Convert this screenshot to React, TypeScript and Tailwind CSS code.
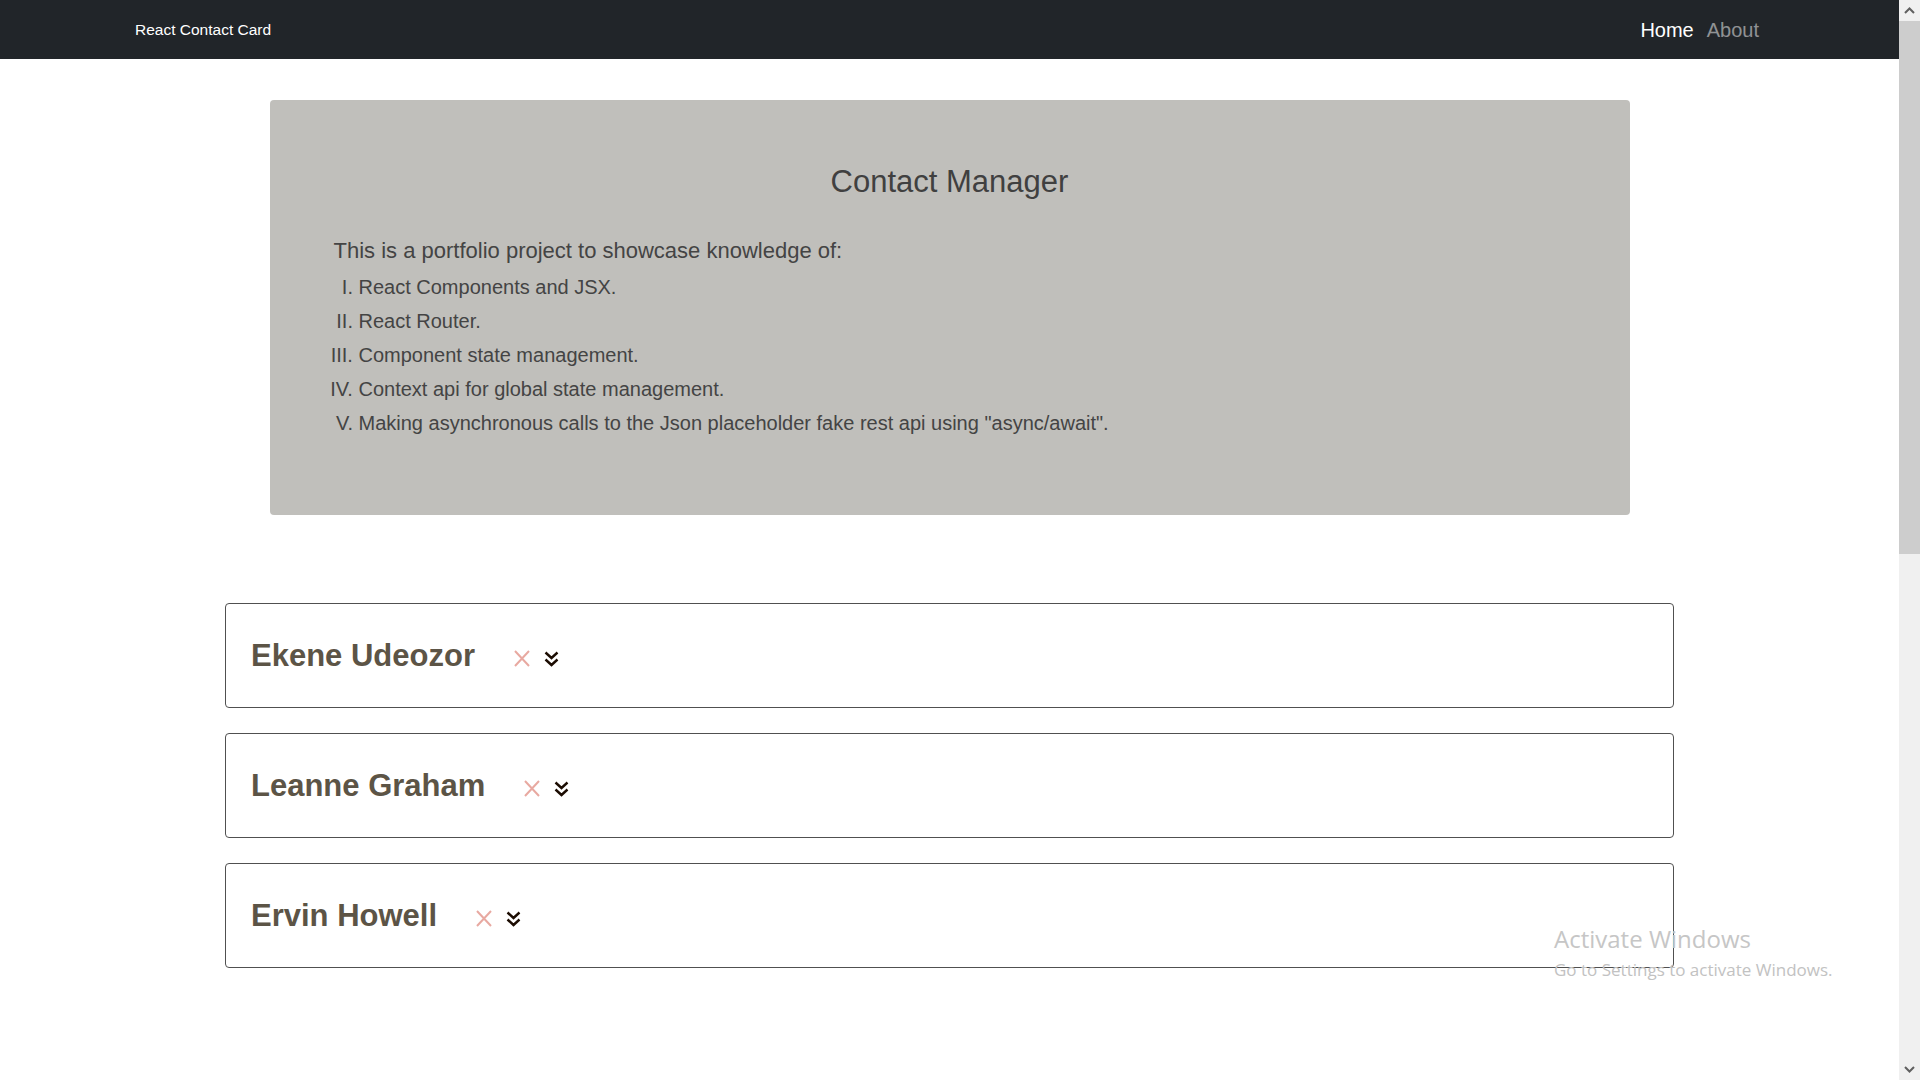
const contacts = ["Ekene Udeozor", "Leanne Graham", "Ervin Howell"];

const features = [
  "React Components and JSX.",
  "React Router.",
  "Component state management.",
  "Context api for global state management.",
  'Making asynchronous calls to the Json placeholder fake rest api using "async/await".',
];

function Navbar() {
  return (
    <nav className="h-[59px] shrink-0 bg-[#212529] flex items-center pl-[135px] pr-[140px]">
      <a className="text-white text-[15.5px] leading-[24px]">React Contact Card</a>
      <div className="ml-auto flex items-center gap-[13px] text-[20px] leading-[30px]">
        <a className="text-white">Home</a>
        <a className="text-white/50">About</a>
      </div>
    </nav>
  );
}

function Contact({ name }: { name: string }) {
  return (
    <div className="h-[105px] shrink-0 border border-[#505050] rounded-[4px] pl-[25px] pr-[24px] flex items-center">
      <h3 className="text-[31px] leading-[37px] font-bold text-[#5c5446]">{name}</h3>
      <div className="ml-[39px] mt-[6px] flex items-center">
        <svg width="16" height="17" viewBox="0 0 16 17" className="cursor-pointer">
          <path d="M1 1 L15 16 M15 1 L1 16" stroke="#e8a9a1" strokeWidth="2" fill="none" />
        </svg>
        <svg width="15" height="16" viewBox="0 0 15 16" className="ml-[14px] cursor-pointer">
          <path
            d="M1.5 1.5 L7.5 7 L13.5 1.5 M1.5 8.5 L7.5 14 L13.5 8.5"
            stroke="#1c0c02"
            strokeWidth="2.4"
            fill="none"
          />
        </svg>
      </div>
    </div>
  );
}

function Scrollbar() {
  return (
    <div className="w-[21px] h-screen shrink-0 bg-[#f0f0f0] flex flex-col">
      <div className="h-[21px] shrink-0 flex items-center justify-center">
        <svg width="11" height="7" viewBox="0 0 11 7">
          <path d="M1 6 L5.5 1.5 L10 6" stroke="#606060" strokeWidth="2" fill="none" />
        </svg>
      </div>
      <div className="h-[533px] shrink-0 bg-[#cdcdcd]" />
      <div className="flex-1" />
      <div className="h-[21px] shrink-0 flex items-center justify-center">
        <svg width="11" height="7" viewBox="0 0 11 7">
          <path d="M1 1 L5.5 5.5 L10 1" stroke="#606060" strokeWidth="2" fill="none" />
        </svg>
      </div>
    </div>
  );
}

export default function App() {
  return (
    <div className="relative flex h-screen overflow-hidden bg-white font-['Liberation_Sans',Arial,sans-serif]">
      <div className="flex-1 flex flex-col overflow-hidden">
        <Navbar />

        <div className="mt-[41px] w-[1360px] mx-auto shrink-0 rounded-[4px] bg-[#c0bfbb] pt-[63px] pb-[75px] px-[64px] text-[#444444]">
          <h1 className="text-center text-[31px] leading-[37px] text-[#404040]">Contact Manager</h1>
          <p className="mt-[36px] text-[22px] leading-[30px]">
            This is a portfolio project to showcase knowledge of:
          </p>
          <ol className="mt-[4px] list-[upper-roman] pl-[25px] text-[20px] leading-[34px]">
            {features.map((f) => (
              <li key={f}>{f}</li>
            ))}
          </ol>
        </div>

        <div className="mt-[88px] w-[1449px] mx-auto flex flex-col gap-[25px] pb-[120px]">
          {contacts.map((c) => (
            <Contact key={c} name={c} />
          ))}
        </div>
      </div>

      <Scrollbar />

      <div className="absolute left-[1554px] top-[924px] pointer-events-none font-['Open_Sans',sans-serif]">
        <div className="text-[24px] leading-[29px] text-[#c6c6c6]">Activate Windows</div>
        <div className="mt-[7px] text-[17px] leading-[20px] text-[#c2c2c2]">
          Go to Settings to activate Windows.
        </div>
      </div>
    </div>
  );
}
